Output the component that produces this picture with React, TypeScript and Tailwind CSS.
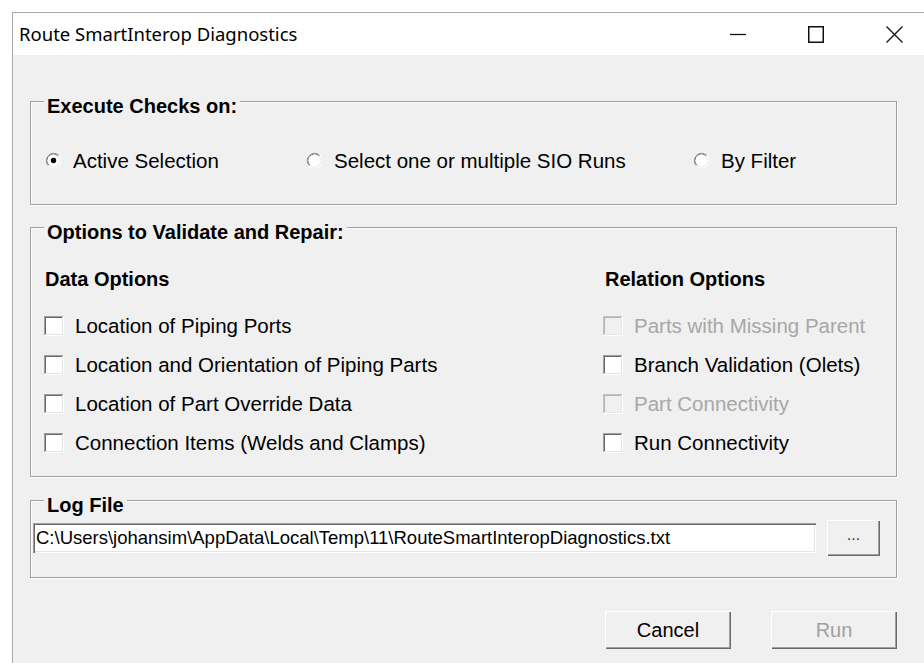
import React from "react";

function RadioDot({ checked }: { checked?: boolean }) {
  return (
    <svg width="17" height="17" viewBox="0 0 17 17" className="shrink-0">
      <circle cx="8.5" cy="8.5" r="8" fill="#fff" />
      <path d="M3.2 13.8 A7.5 7.5 0 0 1 13.8 3.2" stroke="#a0a0a0" strokeWidth="1" fill="none" />
      <path d="M13.8 3.2 A7.5 7.5 0 0 1 3.2 13.8" stroke="#ffffff" strokeWidth="1" fill="none" />
      <path d="M3.9 13.1 A6.5 6.5 0 0 1 13.1 3.9" stroke="#696969" strokeWidth="1" fill="none" />
      <path d="M13.1 3.9 A6.5 6.5 0 0 1 3.9 13.1" stroke="#e3e3e3" strokeWidth="1" fill="none" />
      <circle cx="8.5" cy="8.5" r="6" fill="#fff" />
      {checked && <circle cx="8.5" cy="8.5" r="2.7" fill="#000" />}
    </svg>
  );
}

function CheckBox({ disabled }: { disabled?: boolean }) {
  return (
    <svg width="20" height="20" viewBox="0 0 20 20" className="shrink-0">
      <rect x="0" y="0" width="20" height="20" fill="#fff" />
      <path d="M0 0H19V1H1V19H0Z" fill={disabled ? "#c4c4c4" : "#a0a0a0"} />
      <rect x="1" y="1" width="18" height="18" fill={disabled ? "#e8e8e8" : "#e3e3e3"} />
      <path d="M1 1H18V2H2V18H1Z" fill={disabled ? "#b4b4b4" : "#696969"} />
      <rect x="2" y="2" width="16" height="16" fill={disabled ? "#f0f0f0" : "#fff"} />
    </svg>
  );
}

function Group({ title, className, children }: { title: string; className: string; children: React.ReactNode }) {
  return (
    <div className={`relative w-[867px] border border-[#a0a0a0] shadow-[inset_1px_1px_0_#fff,1px_1px_0_#fff] ${className}`}>
      <span className="absolute -top-[7px] left-[13px] bg-[#f0f0f0] px-[3px] text-[20px] font-bold leading-[23px] text-black">
        {title}
      </span>
      {children}
    </div>
  );
}

function Option({ label, disabled }: { label: string; disabled?: boolean }) {
  return (
    <div className="flex h-[39px] items-center gap-[11px]">
      <CheckBox disabled={disabled} />
      <span className={`text-[20.5px] leading-[23px] ${disabled ? "text-[#a7a7a7]" : "text-black"}`}>{label}</span>
    </div>
  );
}

function WinButton({ label, disabled }: { label: string; disabled?: boolean }) {
  return (
    <button
      className={`flex h-[38px] w-[126px] items-center justify-center bg-[#f0f0f0] text-[20px] shadow-[inset_1px_1px_0_#fff,inset_-1px_-1px_0_#696969,inset_-2px_-2px_0_#a0a0a0] ${
        disabled ? "text-[#a0a0a0]" : "text-black"
      }`}
    >
      {label}
    </button>
  );
}

const dataOptions = [
  "Location of Piping Ports",
  "Location and Orientation of Piping Parts",
  "Location of Part Override Data",
  "Connection Items (Welds and Clamps)",
];

const relationOptions = [
  { label: "Parts with Missing Parent", disabled: true },
  { label: "Branch Validation (Olets)" },
  { label: "Part Connectivity", disabled: true },
  { label: "Run Connectivity" },
];

export default function App() {
  return (
    <div className="h-[663px] w-[924px] overflow-hidden bg-white pl-[12px] pt-[12px] font-['Liberation_Sans',Arial,sans-serif]">
      <div className="flex h-full flex-col border-l border-t border-[#a5a9ae] bg-[#f0f0f0]">
        {/* title bar */}
        <div className="flex h-[42px] shrink-0 items-center justify-between bg-white pl-[6px] pr-[21px]">
          <span className="font-['Segoe_UI','Noto_Sans',sans-serif] text-[18.5px] text-black">Route SmartInterop Diagnostics</span>
          <div className="flex items-center gap-[62px]">
            <svg width="16" height="16" viewBox="0 0 16 16">
              <path d="M0 8.5H16" stroke="#111" strokeWidth="1.3" />
            </svg>
            <svg width="16" height="17" viewBox="0 0 16 17">
              <rect x="0.75" y="0.75" width="14.5" height="15.5" fill="none" stroke="#111" strokeWidth="1.5" />
            </svg>
            <svg width="17" height="17" viewBox="0 0 17 17">
              <path d="M0.5 0.5L16.5 16.5M16.5 0.5L0.5 16.5" stroke="#111" strokeWidth="1.3" />
            </svg>
          </div>
        </div>

        <div className="flex flex-col pl-[17px]">
          <Group title="Execute Checks on:" className="mt-[46px] h-[104px] pt-[46px]">
            <div className="flex h-[24px] items-center pl-[14px] text-[20.5px] leading-[23px] text-black">
              <label className="flex w-[261px] items-center gap-[11px]">
                <RadioDot checked />
                <span>Active Selection</span>
              </label>
              <label className="flex w-[387px] items-center gap-[11px]">
                <RadioDot />
                <span>Select one or multiple SIO Runs</span>
              </label>
              <label className="flex items-center gap-[11px]">
                <RadioDot />
                <span>By Filter</span>
              </label>
            </div>
          </Group>

          <Group title="Options to Validate and Repair:" className="mt-[22px] h-[250px] pt-[40px]">
            <div className="flex pl-[13px]">
              <div className="w-[559px]">
                <div className="pl-[1px] text-[20px] font-bold leading-[23px] text-black">Data Options</div>
                <div className="mt-[15px]">
                  {dataOptions.map((o) => (
                    <Option key={o} label={o} />
                  ))}
                </div>
              </div>
              <div>
                <div className="pl-[2px] text-[20px] font-bold leading-[23px] text-black">Relation Options</div>
                <div className="mt-[15px]">
                  {relationOptions.map((o) => (
                    <Option key={o.label} label={o.label} disabled={o.disabled} />
                  ))}
                </div>
              </div>
            </div>
          </Group>

          <Group title="Log File" className="mt-[23px] h-[78px] pt-[19px]">
            <div className="flex h-[36px] items-center gap-[11px] pl-[2px]">
              <div className="flex h-[30px] w-[783px] items-center overflow-hidden bg-white pl-[3px] text-[18.5px] text-black shadow-[inset_1px_1px_0_#a0a0a0,inset_2px_2px_0_#696969,inset_-1px_-1px_0_#fff,inset_-2px_-2px_0_#e3e3e3]">
                C:\Users\johansim\AppData\Local\Temp\11\RouteSmartInteropDiagnostics.txt
              </div>
              <button className="flex h-[36px] w-[53px] items-center justify-center bg-[#f0f0f0] pb-[6px] text-[16px] text-[#444] shadow-[inset_1px_1px_0_#fff,inset_-1px_-1px_0_#696969,inset_-2px_-2px_0_#a0a0a0]">
                ...
              </button>
            </div>
          </Group>

          <div className="mt-[33px] flex w-[867px] justify-end gap-[40px]">
            <WinButton label="Cancel" />
            <WinButton label="Run" disabled />
          </div>
        </div>
      </div>
    </div>
  );
}
